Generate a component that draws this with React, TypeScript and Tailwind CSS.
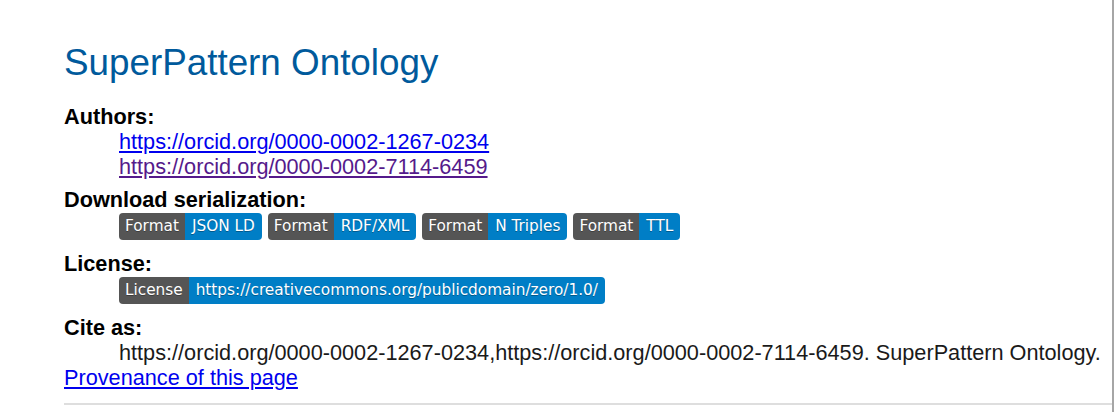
const badgeFont = "font-['DejaVu_Sans',Verdana,sans-serif]";

function Badge({ label, value }: { label: string; value: string }) {
  return (
    <span
      className={`inline-flex h-[27px] items-stretch overflow-hidden rounded-[4px] text-[15.3px] leading-[27px] text-white [text-shadow:0_1px_0_rgba(1,1,1,0.3)] ${badgeFont}`}
    >
      <span className="bg-[#555555] px-[6px]">{label}</span>
      <span className="bg-[#007ec6] px-[7px]">{value}</span>
    </span>
  );
}

export default function App() {
  const formats = ["JSON LD", "RDF/XML", "N Triples", "TTL"];
  return (
    <div className="h-[412px] w-[1114px] overflow-hidden border-r-2 border-[#a6a6a6] bg-white font-['Liberation_Sans',Arial,sans-serif] text-[21.7px] leading-[25px] text-black">
      <div className="pl-16 pt-[42px]">
        <h1 className="text-[36.8px] font-normal leading-[42px] text-[#005a9c]">
          SuperPattern Ontology
        </h1>
        <dl className="mt-[20px]">
          <dt className="font-bold">Authors:</dt>
          <dd className="pl-[55px]">
            <a href="#" className="block w-fit text-[#0000ee] underline">
              https://orcid.org/0000-0002-1267-0234
            </a>
            <a href="#" className="block w-fit text-[#551a8b] underline">
              https://orcid.org/0000-0002-7114-6459
            </a>
          </dd>
          <dt className="mt-[8px] font-bold">Download serialization:</dt>
          <dd className="mt-[1px] flex gap-[6px] pl-[55px]">
            {formats.map((f) => (
              <Badge key={f} label="Format" value={f} />
            ))}
          </dd>
          <dt className="mt-[11px] font-bold">License:</dt>
          <dd className="mt-[1px] flex pl-[55px]">
            <Badge
              label="License"
              value="https://creativecommons.org/publicdomain/zero/1.0/"
            />
          </dd>
          <dt className="mt-[11px] font-bold">Cite as:</dt>
          <dd className="pl-[55px] text-[#1a1a1a]">
            https://orcid.org/0000-0002-1267-0234,https://orcid.org/0000-0002-7114-6459.
            SuperPattern Ontology.
          </dd>
        </dl>
        <a href="#" className="block w-fit text-[#0000ee] underline">
          Provenance of this page
        </a>
        <hr className="mt-[13px] border-0 border-t-2 border-[#dedede]" />
      </div>
    </div>
  );
}
